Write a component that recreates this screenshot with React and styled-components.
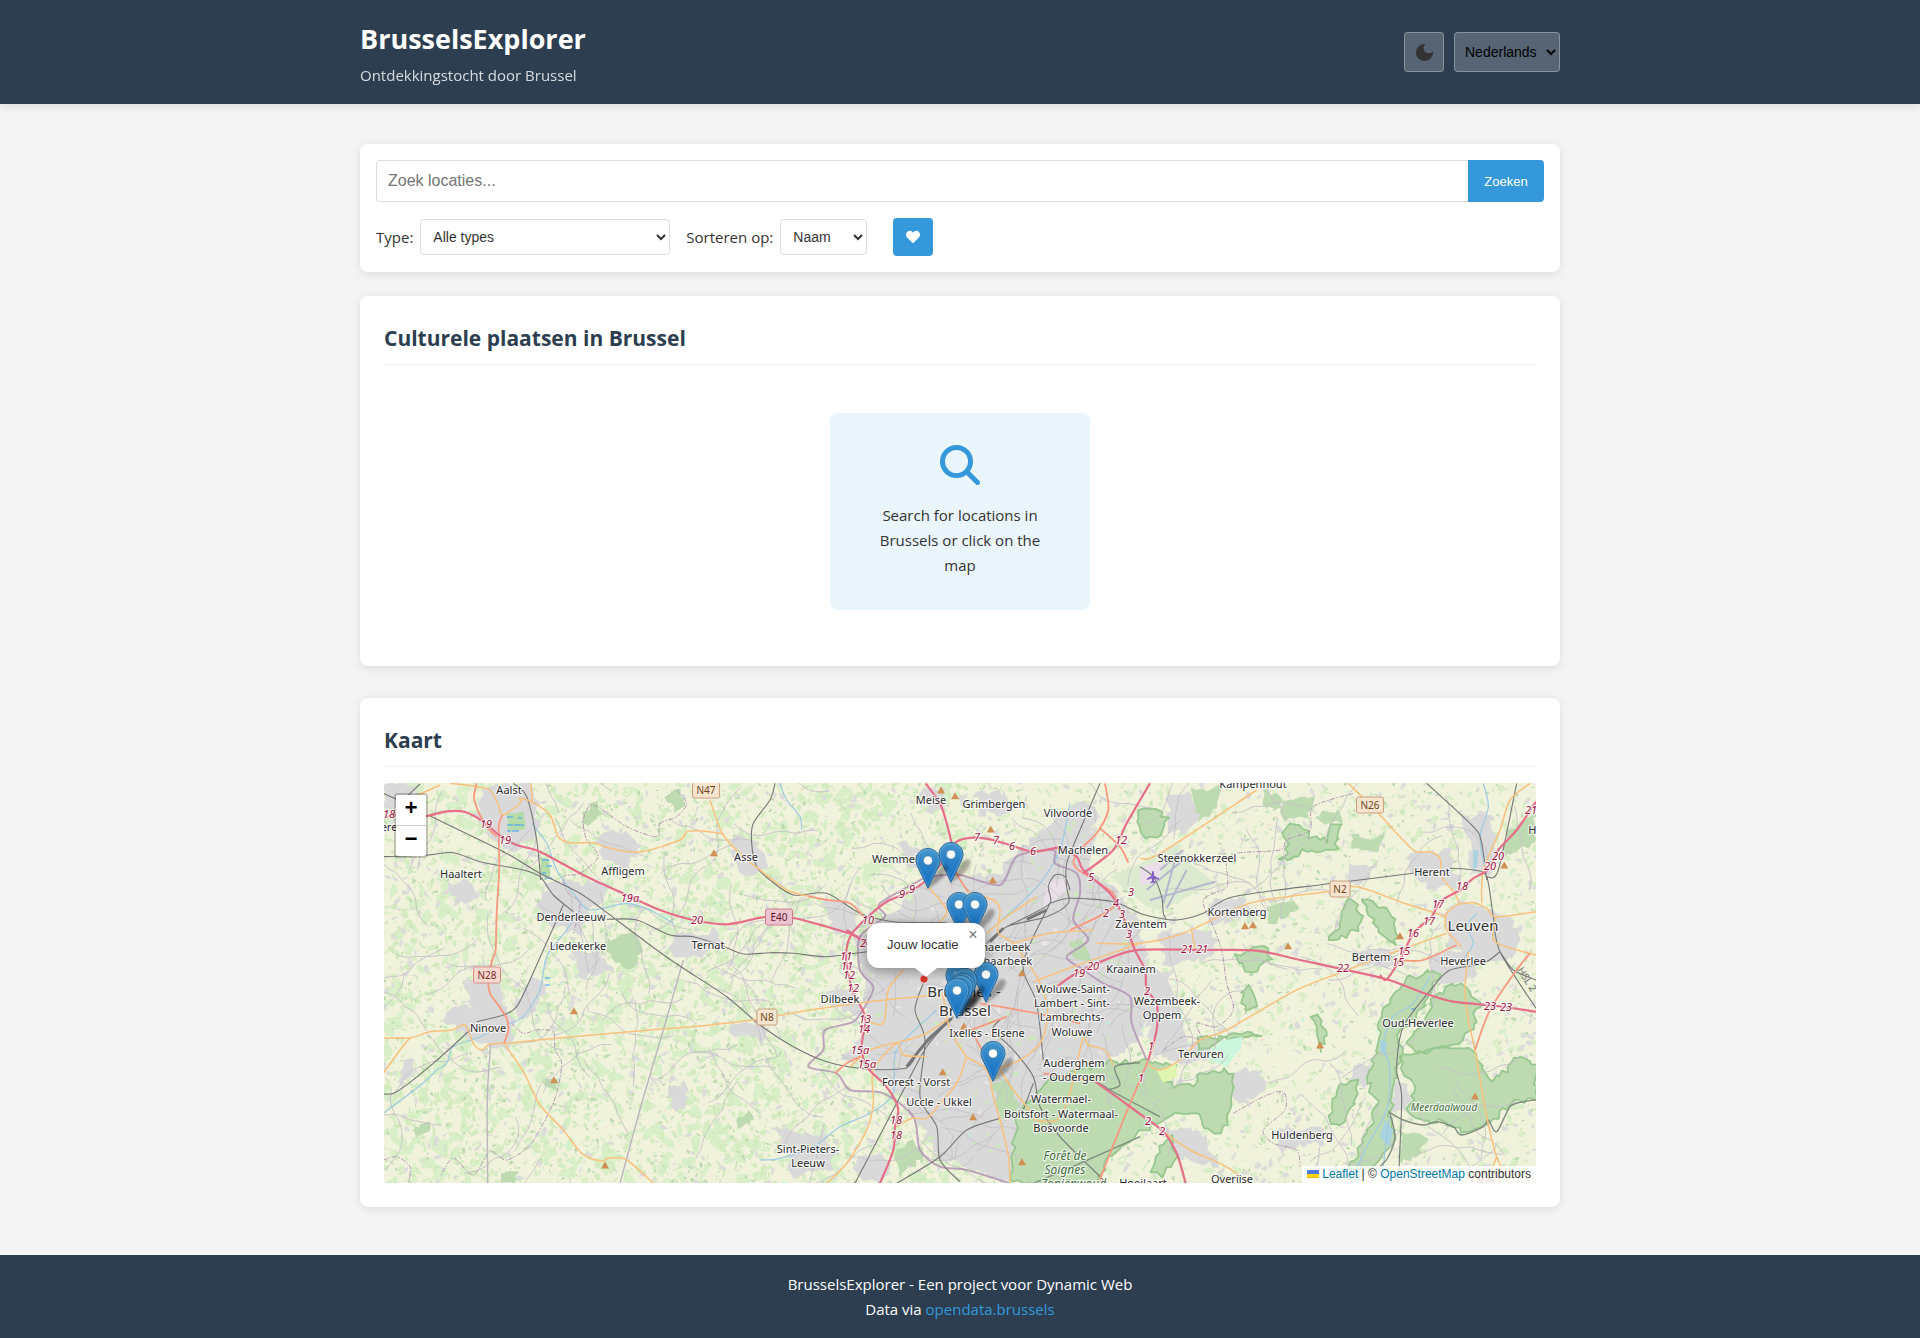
import React from 'react';
import styled, { createGlobalStyle, css } from 'styled-components';
import { FaHeart } from 'react-icons/fa';

const GlobalStyle = createGlobalStyle`
  * { box-sizing: border-box; margin: 0; padding: 0; }
  body {
    background: #f4f4f4;
    color: #333;
    font-family: 'Open Sans', 'Noto Sans', sans-serif;
    font-size: 15px;
    line-height: 26px;
  }
`;

const control = css`
  font-family: 'Liberation Sans', Arial, sans-serif;
  font-size: 14px;
  border-radius: 4px;
`;

const Page = styled.div`
  min-height: 100vh;
  display: flex;
  flex-direction: column;
`;

const Container = styled.div`
  width: 100%;
  max-width: 1200px;
  margin: 0 auto;
`;

const Header = styled.header`
  background: #2c3e50;
  color: #fff;
  padding: 16px 0;
  box-shadow: 0 2px 10px rgba(0, 0, 0, 0.1);
`;

const HeaderRow = styled(Container)`
  display: flex;
  justify-content: space-between;
  align-items: center;
`;

const Brand = styled.h1`
  font-size: 27px;
  line-height: 46px;
  font-weight: 700;
`;

const Tagline = styled.p`
  opacity: 0.8;
`;

const HeaderTools = styled.div`
  display: flex;
  gap: 10px;
`;

const ThemeButton = styled.button`
  ${control}
  width: 40px;
  height: 40px;
  display: grid;
  place-items: center;
  color: #333;
  background: rgba(255, 255, 255, 0.2);
  border: 1px solid rgba(255, 255, 255, 0.3);
`;

const LanguageSelect = styled.select`
  ${control}
  width: 106px;
  height: 40px;
  padding: 0 6px;
  color: #000;
  background: rgba(255, 255, 255, 0.2);
  border: 1px solid rgba(255, 255, 255, 0.3);
`;

const Main = styled.main`
  flex: 1;
  padding: 40px 0 48px;
`;

const Card = styled.section`
  background: #fff;
  border-radius: 8px;
  box-shadow: 0 2px 10px rgba(0, 0, 0, 0.1);
  padding: ${(p) => (p.$compact ? '16px' : '24px')};
  margin-top: ${(p) => p.$gap || 0}px;
`;

const SearchForm = styled.form`
  display: flex;
`;

const SearchInput = styled.input`
  ${control}
  flex: 1;
  min-width: 0;
  height: 42px;
  padding: 0 11px;
  font-size: 16px;
  color: #333;
  background: #fff;
  border: 1px solid #ddd;
  border-right: 0;
  border-radius: 4px 0 0 4px;
  &::placeholder { color: #757575; }
`;

const SearchButton = styled.button`
  ${control}
  width: 76px;
  font-size: 13px;
  font-weight: 500;
  color: #fff;
  background: #3498db;
  border: 0;
  border-radius: 0 4px 4px 0;
`;

const Filters = styled.div`
  display: flex;
  align-items: center;
  gap: 16px;
  margin-top: 16px;
`;

const FilterGroup = styled.div`
  display: flex;
  align-items: center;
  gap: 7px;
`;

const FilterSelect = styled.select`
  ${control}
  width: ${(p) => p.$width}px;
  height: 36px;
  padding: 0 8px;
  color: #333;
  background: #fff;
  border: 1px solid #ddd;
`;

const FavouriteButton = styled.button`
  ${control}
  width: 40px;
  height: 38px;
  margin-left: 10px;
  display: grid;
  place-items: center;
  color: #fff;
  background: #3498db;
  border: 0;
`;

const Title = styled.h2`
  font-size: 21px;
  line-height: 36px;
  color: #2c3e50;
  padding-bottom: 8px;
  margin-bottom: 16px;
  border-bottom: 1px solid #eee;
`;

const Results = styled.div`
  padding: 32px 0;
  display: flex;
  justify-content: center;
`;

const Placeholder = styled.div`
  width: 260px;
  padding: 32px 40px;
  border-radius: 8px;
  background: #ebf5fc;
  text-align: center;
  line-height: 25px;
  svg { display: block; margin: 0 auto 18px; }
`;

const MapFrame = styled.div`
  position: relative;
  height: 400px;
  border-radius: 4px;
  overflow: hidden;
  background: #ddd;
  font: 12px/18px 'Liberation Sans', Arial, sans-serif;
`;

const MapSvg = styled.svg`
  display: block;
  width: 100%;
  height: 100%;
  font-family: 'Noto Sans', sans-serif;
`;

const ZoomControls = styled.div`
  position: absolute;
  top: 10px;
  left: 10px;
  border: 2px solid rgba(0, 0, 0, 0.2);
  border-radius: 4px;
  background-clip: padding-box;
  display: flex;
  flex-direction: column;
`;

const ZoomButton = styled.button`
  width: 30px;
  height: 30px;
  background: #fff;
  border: 0;
  color: #000;
  font: bold 22px/30px 'Liberation Mono', monospace;
  &:first-child {
    height: 31px;
    border-bottom: 1px solid #ccc;
    border-radius: 2px 2px 0 0;
  }
  &:last-child { border-radius: 0 0 2px 2px; }
`;

const Popup = styled.div`
  position: absolute;
  left: calc(50% - 93px);
  top: 140px;
  width: 118px;
  height: 45px;
  padding: 13px 20px;
  border-radius: 12px;
  background: #fff;
  color: #333;
  font-size: 13px;
  white-space: nowrap;
  box-shadow: 0 3px 14px rgba(0, 0, 0, 0.4);
  &::after {
    content: '';
    position: absolute;
    left: 48px;
    top: 45px;
    border: 11px solid transparent;
    border-top: 9px solid #fff;
    border-bottom: 0;
  }
`;

const PopupClose = styled.button`
  position: absolute;
  top: 0;
  right: 0;
  width: 24px;
  height: 24px;
  border: 0;
  background: none;
  color: #757575;
  font: 16px/24px 'Liberation Sans', Arial, sans-serif;
`;

const Attribution = styled.div`
  position: absolute;
  right: 0;
  bottom: 0;
  height: 17px;
  padding: 0 5px;
  line-height: 17px;
  background: rgba(255, 255, 255, 0.8);
  a { color: #0078a8; text-decoration: none; }
`;

const Footer = styled.footer`
  background: #2c3e50;
  color: #fff;
  text-align: center;
  line-height: 25px;
  padding: 17px 0 16px;
  a { color: #3498db; text-decoration: none; }
`;

/* ---------- Map sheets: every sheet holds its own survey grid at 1:3 ---------- */

const SHEETS = {
  nw: [350, 680], sw: [350, 930], n: [760, 770],
  s: [760, 970], ne: [1140, 770], se: [1140, 970],
};

const place = (sheet, x, y) => [SHEETS[sheet][0] + x / 3, SHEETS[sheet][1] + y / 3];

const parse = (sheet, text) =>
  text.trim().split(/\s+/).map((pair) => {
    const [x, y] = pair.split(',').map(Number);
    return place(sheet, x, y);
  });

const f = (v) => v.toFixed(1);

const curve = (pts) => {
  let d = `M${f(pts[0][0])} ${f(pts[0][1])}`;
  for (let i = 0; i < pts.length - 1; i += 1) {
    const a = pts[i - 1] || pts[i];
    const b = pts[i];
    const c = pts[i + 1];
    const e = pts[i + 2] || c;
    d += `C${f(b[0] + (c[0] - a[0]) / 7)} ${f(b[1] + (c[1] - a[1]) / 7)} ${f(c[0] - (e[0] - b[0]) / 7)} ${f(c[1] - (e[1] - b[1]) / 7)} ${f(c[0])} ${f(c[1])}`;
  }
  return d;
};

const lines = (rows) => rows.map(([sheet, text]) => curve(parse(sheet, text))).join('');

const seeded = (seed) => {
  let s = seed;
  return () => {
    s = (s * 1664525 + 1013904223) % 4294967296;
    return s / 4294967296;
  };
};

const crumple = (pts, rnd, amount) => {
  const out = [];
  pts.forEach((a, i) => {
    const b = pts[(i + 1) % pts.length];
    const n = Math.max(1, Math.round(Math.hypot(b[0] - a[0], b[1] - a[1]) / 5));
    for (let k = 0; k < n; k += 1) {
      out.push([
        a[0] + ((b[0] - a[0]) * k) / n + (rnd() - 0.5) * amount,
        a[1] + ((b[1] - a[1]) * k) / n + (rnd() - 0.5) * amount,
      ]);
    }
  });
  return `M${out.map((p) => `${f(p[0])} ${f(p[1])}`).join('L')}Z`;
};

const areas = (rows, seed, amount) => {
  const rnd = seeded(seed);
  return rows.map(([sheet, text]) => crumple(parse(sheet, text), rnd, amount)).join('');
};

const patches = (seed, count, min, max, box = [384, 783, 1152, 400]) => {
  const rnd = seeded(seed);
  let d = '';
  for (let i = 0; i < count; i += 1) {
    const x = box[0] + rnd() * box[2];
    const y = box[1] + rnd() * box[3];
    const len = min + rnd() * (max - min);
    const wide = len * (0.25 + rnd() * 0.45);
    const turn = rnd() * Math.PI;
    const n = 6;
    const pts = [];
    for (let k = 0; k < n; k += 1) {
      const t = (k / n) * Math.PI * 2;
      const r = 0.55 + rnd() * 0.75;
      const px = Math.cos(t) * len * r * 0.5;
      const py = Math.sin(t) * wide * r * 0.5;
      pts.push(`${f(x + px * Math.cos(turn) - py * Math.sin(turn))} ${f(y + px * Math.sin(turn) + py * Math.cos(turn))}`);
    }
    d += `M${pts.join('L')}Z`;
  }
  return d;
};

const lanes = (seed, count, steps, box = [384, 783, 1152, 400]) => {
  const rnd = seeded(seed);
  let d = '';
  for (let i = 0; i < count; i += 1) {
    let x = box[0] + rnd() * box[2];
    let y = box[1] + rnd() * box[3];
    let a = rnd() * Math.PI * 2;
    const pts = [[x, y]];
    for (let k = 0; k < steps; k += 1) {
      a += (rnd() - 0.5) * 0.9;
      x += Math.cos(a) * 11;
      y += Math.sin(a) * 11;
      pts.push([x, y]);
    }
    d += curve(pts);
  }
  return d;
};

const CITY = [['n', '400,440 480,350 560,310 700,320 780,240 880,150 960,90 1010,120 990,300 1060,360 1130,430 1160,560 1170,680 1150,800 1040,880 1080,960 1030,1050 900,1070 790,1090 750,1240 640,1200 540,1160 470,1050 420,980 370,930 310,880 230,870 300,800 330,720 300,600 280,500']];

const TOWNS = [
  ['nw', '400,320 530,310 560,370 560,460 500,520 420,470 380,400'],
  ['nw', '590,610 680,600 720,680 700,760 600,740 560,680'],
  ['nw', '100,320 160,310 200,345 150,390 100,380'],
  ['nw', '740,470 820,450 880,500 830,560 760,540'],
  ['nw', '700,600 790,610 760,670 700,680'],
  ['nw', '300,610 350,590 380,650 320,680'],
  ['nw', '1150,470 1220,480 1250,570 1190,590 1150,550'],
  ['sw', '340,150 440,140 470,230 500,280 480,360 400,350 280,280 290,240 370,230'],
  ['sw', '540,150 590,140 560,230 500,270 490,240'],
  ['sw', '660,60 740,70 790,130 700,140'],
  ['sw', '970,20 1100,0 1110,60 1010,90 960,70'],
  ['sw', '1140,280 1250,270 1260,330 1150,320'],
  ['sw', '950,480 1010,460 1010,530 980,540'],
  ['sw', '160,390 200,400 190,450 150,450'],
  ['n', '420,220 500,230 500,300 440,300'],
  ['n', '480,60 560,60 550,120 500,130'],
  ['n', '640,60 740,70 760,130 660,130'],
  ['n', '180,380 270,400 290,480 220,500'],
  ['s', '190,60 300,60 300,130 220,120'],
  ['ne', '80,80 150,60 180,130 140,200 90,180'],
  ['ne', '200,400 310,370 340,420 220,470'],
  ['ne', '60,480 220,490 230,560 70,590'],
  ['ne', '620,290 700,290 690,340 620,340'],
  ['ne', '800,250 930,240 960,350 880,360 820,310'],
  ['ne', '920,420 980,390 1070,430 1140,470 1120,560 1000,570 920,520'],
  ['ne', '970,130 1060,150 1060,310 1000,300'],
  ['ne', '640,540 760,540 770,590 650,590'],
  ['ne', '860,560 990,540 1010,620 900,640'],
  ['se', '0,0 70,0 120,120 150,240 50,260 20,150'],
  ['se', '70,230 180,220 240,270 120,290'],
  ['se', '70,470 200,500 230,590 110,560'],
  ['se', '260,300 360,300 380,360 300,410'],
  ['se', '640,290 700,280 680,350 630,330'],
  ['se', '760,330 800,350 810,430 750,430'],
  ['se', '400,480 540,470 560,520 420,540'],
  ['s', '50,480 200,500 220,590 100,620'],
  ['s', '280,560 360,540 400,620 300,640'],
];

const FORESTS = [
  ['se', '-370,440 -280,330 -90,275 50,275 110,285 60,310 100,350 170,345 180,305 220,310 260,290 280,330 265,390 270,460 230,490 190,480 180,440 110,430 50,460 -20,500 -90,560 -130,640 -390,640'],
  ['se', '790,260 850,240 950,235 1000,245 1050,330 1100,300 1140,255 1188,290 1188,385 1110,400 1060,450 980,490 900,455 860,460 800,430 830,350 790,300'],
  ['se', '880,80 950,40 1020,95 990,190 920,230 840,250 800,220 860,160'],
  ['se', '720,130 800,30 870,0 900,10 850,110 780,190 780,260 750,420 760,520 700,590 640,640 620,620 680,500 710,400 680,320 710,240'],
  ['se', '600,350 650,335 660,370 600,470 565,455 580,400'],
  ['se', '515,135 545,145 560,190 540,240 525,190'],
  ['se', '300,60 330,50 350,110 315,120'],
  ['se', '170,210 300,195 370,190 240,210 180,250'],
  ['se', '60,530 90,500 110,560 70,620 40,610'],
  ['ne', '430,190 470,160 510,200 570,210 575,160 595,170 590,240 500,240 420,275 450,230'],
  ['ne', '600,420 640,385 665,440 650,480 600,510 565,510 600,460'],
  ['ne', '665,380 700,400 760,430 775,480 760,530 720,490 690,440'],
  ['ne', '0,120 50,110 80,150 50,200 0,200'],
  ['ne', '290,560 370,530 390,570 330,610'],
];

const WOODS = [
  ['nw', '700,390 735,370 760,400 720,430 695,425'],
  ['nw', '990,330 1010,380 970,400 950,350'],
  ['sw', '770,30 850,10 880,70 830,120 780,90'],
  ['sw', '190,590 230,580 240,610 200,630'],
  ['sw', '560,450 620,440 625,480 590,470'],
  ['sw', '1160,560 1200,540 1210,580 1170,590'],
  ['sw', '460,730 500,720 490,760 460,760'],
  ['ne', '160,60 250,50 230,120 180,150'],
  ['ne', '370,60 420,80 420,120 360,110'],
  ['ne', '420,90 520,80 500,150 430,150'],
  ['ne', '540,130 600,120 610,160 540,160'],
  ['ne', '640,200 730,200 720,250 640,240'],
  ['ne', '1100,190 1188,120 1188,220 1090,260'],
  ['ne', '380,410 460,390 480,420 390,460'],
  ['n', '930,510 960,500 990,580 940,570'],
  ['n', '600,500 650,540 620,570'],
  ['s', '690,340 740,320 780,420 770,450 720,440'],
  ['s', '400,540 460,510 500,560 420,620'],
  ['se', '780,480 860,500 830,560 780,580'],
];

const MOTORWAYS = lines([
  ['nw', '100,415 130,405 165,410 230,408 290,394 345,396 400,425 447,465 500,495 570,515 700,585 830,645 930,690 1030,720 1130,733 1245,711 1330,714 1430,740 1505,762'],
  ['n', '497,40 540,100 560,160 575,220'],
  ['n', '895,232 820,245 750,225 690,208 640,203 590,215 560,260 500,330 440,370 380,395 330,435 275,492 258,550 265,610 280,670 315,740 305,830 320,890 370,940 400,980 415,1020 405,1070 400,1140 360,1240'],
  ['n', '895,232 950,260 970,300 1050,370 1085,430 1110,500 1125,541 1155,600 1160,660 1190,700 1190,780 1165,870'],
  ['n', '970,310 1060,240 1100,160 1170,40'],
  ['n', '890,650 940,615 1000,585 1125,541 1340,540 1490,542 1620,570 1750,598 1880,628 2000,672 2080,695 2210,708 2328,725'],
  ['n', '275,492 320,520 260,480'],
  ['se', '-140,330 0,432 70,485 110,550 137,640'],
  ['ne', '1188,95 1130,180 1075,240 1050,295 1000,325 960,360 900,395 875,440 820,490 785,560 740,628 720,615'],
]);

const TRUNKS = lines([
  ['nw', '380,310 372,350 385,395 410,440 440,470'],
  ['nw', '458,405 446,440 448,560 440,700 437,810 430,830 415,890 420,940 445,975 470,1015 475,1050 462,1090'],
  ['n', '1035,40 1045,120 1010,190 960,240 945,290 1060,370 1050,420 930,480'],
  ['n', '1020,175 1080,230 1105,278'],
  ['n', '145,378 200,390 270,400 320,450'],
  ['n', '575,220 590,310 625,365'],
  ['ne', '780,570 850,570 950,525'],
  ['ne', '1170,550 1130,600 1050,720 1005,840'],
  ['s', '1165,270 1090,450 1015,640'],
  ['s', '225,310 260,280 300,260'],
  ['s', '640,190 700,310'],
  ['s', '660,100 830,130 960,160'],
  ['s', '850,310 980,330'],
  ['s', '740,140 620,185'],
]);

const SECONDARY = lines([
  ['nw', '205,345 270,315'],
  ['nw', '300,310 370,318 420,330 445,375 458,405 510,370 510,355 550,368 600,405 625,470 660,488 730,488 780,505 870,516 990,480 1010,455 1060,453 1118,462'],
  ['nw', '1080,360 1118,462 1180,530 1230,570 1310,630 1375,648'],
  ['nw', '542,310 547,365'],
  ['sw', '100,324 180,324 240,305 305,300 345,285 370,340 395,360 420,343 490,338 620,325 900,300 1060,287 1220,268 1380,240 1560,215 1730,198 1800,195'],
  ['sw', '180,324 150,360 100,430'],
  ['sw', '462,340 520,425 570,525 640,600 695,670 755,693 775,685 830,690 910,760'],
  ['n', '505,350 560,420 540,455'],
  ['n', '625,365 700,390 720,420 715,490 760,520 830,620 860,700 860,760 840,820 780,870 700,900'],
  ['s', '620,262 680,300 700,380 720,450 745,555 750,640'],
  ['s', '720,300 760,360 800,410 830,450 890,450 920,400 940,330 970,200 985,225 1035,240 1060,285'],
  ['s', '620,262 590,340 540,400 500,445 455,445 410,470'],
  ['s', '560,150 490,195 400,220 330,240 270,290'],
  ['s', '200,640 260,580 320,480 340,400 340,300 410,220 430,255 500,260'],
  ['s', '430,0 385,60 370,160 310,150'],
  ['s', '550,80 570,180 620,262'],
  ['n', '760,520 870,490 1000,480'],
  ['n', '820,635 940,590 1140,520'],
  ['n', '680,490 740,440 830,380'],
  ['ne', '0,265 60,250 350,60'],
  ['ne', '-130,520 0,520 130,490 330,400 560,365 650,350 780,395 920,440'],
  ['ne', '625,40 720,135 820,240 870,245 900,265 905,320 945,370 960,400 1000,398 1040,415 1068,440 1188,425'],
  ['ne', '960,400 920,430 920,480 965,530'],
  ['ne', '1068,440 1065,515 1188,555'],
  ['ne', '920,490 780,540 600,608 460,665 260,780 180,810 120,870 60,900 25,885'],
  ['ne', '155,480 165,540'],
  ['ne', '1170,40 1110,90 1080,180 1030,300 1025,400'],
  ['ne', '985,545 975,660 985,750 1005,840 1040,1040 1070,1160 1110,1240'],
  ['se', '1070,560 1055,600'],
  ['se', '70,485 150,540 240,580 290,610 320,640'],
]);

const RAILWAYS = lines([
  ['nw', '100,340 140,358'],
  ['nw', '170,350 210,312'],
  ['nw', '240,408 460,515 570,580 690,640 800,720 920,810 1000,865 1130,950 1230,1035 1330,1100 1430,1145 1550,1167 1650,1167 1680,1155 1730,1080 1810,1010'],
  ['nw', '100,530 230,525 310,518 390,545 520,570 570,590 610,645 670,695'],
  ['nw', '490,310 530,350 560,480 572,600'],
  ['nw', '640,675 580,810 540,900 500,980 460,1005 380,1025'],
  ['nw', '770,718 860,720 960,765 1030,770 1110,795 1180,822 1260,818 1330,820 1430,830 1550,815'],
  ['nw', '1275,310 1260,360 1210,430 1205,490 1220,560 1260,600 1330,645 1430,640 1530,700 1630,725 1790,728'],
  ['sw', '100,492 140,485 250,400 360,300'],
  ['n', '1020,40 960,180 920,280 920,350 925,400 860,440 740,470 680,520'],
  ['n', '740,470 800,440 870,400 865,350 885,315 915,320 930,360'],
  ['n', '870,400 930,385 1060,395 1140,430 1200,445 1250,450 1330,430 1420,380 1700,342 1960,310'],
  ['s', '285,640 420,380 500,230 580,140'],
  ['s', '490,40 465,120 495,210 480,380 530,470 540,570 600,635'],
  ['s', '410,640 540,560 620,480 720,445'],
  ['s', '720,150 700,180 760,240 820,320 840,410 900,500 1000,600 1040,640'],
  ['s', '850,270 830,100 790,-20 870,-200'],
  ['s', '820,340 790,420'],
  ['ne', '930,295 1000,300 1040,320 1060,440 1080,545 1188,715'],
  ['ne', '860,40 1000,170 1025,220 1040,330'],
  ['ne', '1130,40 1075,300 1040,320'],
  ['ne', '1080,545 1030,580 930,600 880,650 790,770 770,900 785,980 775,1240'],
  ['ne', '0,290 40,320 65,380 70,430 80,450'],
  ['ne', '1080,545 1120,600 1188,630'],
]);

const YARDS = lines([
  ['s', '440,290 500,215 575,145'],
  ['n', '730,475 690,515'],
  ['n', '860,420 800,448'],
]);

const RIVERS = lines([
  ['nw', '545,430 590,490 620,570 670,640 720,690 830,670 900,690 970,730'],
  ['nw', '690,690 650,750 590,830 570,930 520,1010 480,1030'],
  ['sw', '100,550 180,490 230,450 260,420 290,400 310,350 380,325 430,300'],
  ['n', '930,100 900,240 840,340 770,410 690,480'],
  ['n', '60,40 80,90 120,140 125,180'],
  ['s', '0,570 60,565 160,530 240,470 330,430 400,370 410,240 530,120'],
  ['ne', '1030,40 1045,110 1020,200 1035,300'],
  ['ne', '1010,430 980,470 1000,520 960,580'],
  ['se', '870,20 820,100 760,140 730,220 750,300 740,420 680,530 640,620'],
  ['se', '750,440 740,500 730,590'],
]);

const BORDERS = lines([
  ['nw', '980,330 1010,370 980,410 930,430 920,470 830,440 730,375 700,420 710,480 745,530 690,580 640,590 655,640 690,670 670,760'],
  ['sw', '485,280 520,310 560,300 610,305 615,360 635,400 620,490 590,560 540,645 470,690 420,665 370,735 310,685 270,740'],
  ['sw', '100,690 140,680 180,710 175,760'],
  ['ne', '640,70 520,110 510,180 440,210 420,240 290,250 260,280 260,350 190,390 220,470 245,540 260,640 280,720 230,770 170,760 190,810'],
  ['se', '70,240 130,200 180,210'],
  ['se', '280,430 370,380 430,365 435,420 370,480 400,520 470,540 480,590'],
]);

const REGION = lines([
  ['n', '500,320 600,315 720,345 770,260 880,240 885,280 950,310 960,370 940,450 985,510 920,560 970,600 1030,640 1110,680 1115,760 1160,870'],
  ['n', '500,320 360,400 375,440 300,500 300,600 340,650 320,700 280,755 195,780 190,840 145,890 230,910 270,960 370,970 460,1040 480,1140 540,1190 620,1200 750,1240'],
]);

const GREY_BORDER = lines([
  ['se', '745,425 790,450 850,465 890,455 940,470 965,495 1030,470 1045,450 1070,485 1110,410 1150,395 1188,390'],
  ['se', '750,430 765,500 745,560 720,590'],
  ['s', '990,320 1050,360 1200,440'],
  ['s', '820,640 960,580 1140,500'],
  ['s', '1040,360 1080,345 1065,290 1140,278'],
]);

const RUNWAYS = lines([
  ['ne', '20,360 130,270'], ['ne', '30,390 225,335'], ['ne', '110,250 70,400'],
  ['ne', '60,300 130,240'], ['ne', '140,300 80,415'],
]);

const LABELS = [
  ['nw', 478, 343, 'Aalst'], ['nw', 333, 593, 'Haaltert'], ['nw', 820, 585, 'Affligem'],
  ['nw', 1187, 543, 'Asse'], ['nw', 664, 724, 'Denderleeuw'], ['nw', 118, 452, 'ere'],
  ['sw', 683, 59, 'Liedekerke'], ['sw', 1075, 56, 'Ternat'], ['sw', 413, 305, 'Ninove'],
  ['n', 514, 102, 'Meise'], ['n', 701, 114, 'Grimbergen'], ['n', 925, 140, 'Vilvoorde'],
  ['n', 968, 251, 'Machelen'], ['n', 404, 278, 'Wemmel'], ['n', 1144, 473, 'Zaventem'],
  ['n', 1114, 608, 'Kraainem'], ['n', 720, 542, 'Schaerbeek'], ['n', 716, 584, '- Schaarbeek'],
  ['s', 241, 98, 'Dilbeek'], ['s', 680, 201, 'Ixelles - Elsene'],
  ['s', 938, 70, 'Woluwe-Saint-'], ['s', 937, 112, 'Lambert - Sint-'],
  ['s', 937, 154, 'Lambrechts-'], ['s', 937, 197, 'Woluwe'],
  ['s', 943, 291, 'Auderghem'], ['s', 943, 334, '- Oudergem'],
  ['s', 467, 349, 'Forest - Vorst'], ['s', 536, 407, 'Uccle - Ukkel'],
  ['s', 902, 400, 'Watermael-'], ['s', 902, 443, 'Boitsfort - Watermaal-'],
  ['s', 902, 486, 'Bosvoorde'], ['s', 145, 548, 'Sint-Pieters-'], ['s', 145, 590, 'Leeuw'],
  ['s', 1148, 650, 'Hoeilaart'],
  ['se', 80, 105, 'Wezembeek-'], ['se', 65, 147, 'Oppem'],
  ['ne', 338, 53, 'Kampenhout'], ['ne', 170, 275, 'Steenokkerzeel'],
  ['ne', 292, 438, 'Kortenberg'], ['ne', 877, 318, 'Herent'], ['ne', 692, 574, 'Bertem'],
  ['ne', 968, 584, 'Heverlee'], ['ne', 1210, 192, 'Holsb'],
  ['se', 182, 263, 'Tervuren'], ['se', 486, 506, 'Huldenberg'],
  ['se', 833, 171, 'Oud-Heverlee'], ['se', 275, 640, 'Overijse'],
  ['s', 613, 80, 'Bruxelles -', 'city'], ['s', 614, 137, 'Brussel', 'city'],
  ['ne', 1000, 483, 'Leuven', 'city'],
  ['s', 915, 570, 'Forêt de', 'wood'], ['s', 915, 612, 'Soignes', 'wood'],
  ['s', 930, 654, '- Zoniënwoud', 'wood'], ['se', 913, 422, 'Meerdaalwoud', 'grove'],
];

const LABEL_STYLES = {
  town: { size: 11, fill: '#2b2b2b' },
  city: { size: 15, fill: '#333' },
  wood: { size: 12, fill: '#46703f', italic: true },
  grove: { size: 10, fill: '#46703f', italic: true },
  exit: { size: 11, fill: '#a5123c', italic: true },
};

const EXITS = {
  nw: '18@118,415 19@407,443 19@466,492 19a@840,665 20@1042,731',
  n: '7@651,214 7@708,222 6@756,241 6@820,256 12@1083,222 9@427,383 9@457,370 10@324,461 2@310,532 11@257,570 11@262,600 12@266,628 5@993,333 3@1113,378 4@1069,412 2@1039,440 3@1085,444 3@1106,505 20@1000,601 19@957,622',
  s: '12@280,66 13@316,160 14@311,190 15a@300,252 15a@320,294 18@409,461 18@409,508 2@1162,74 1@1173,240 1@1144,335 2@1165,466',
  ne: '21@140,549 21@187,549 22@610,607 21@1173,132 20@1073,270 20@1050,299 18@967,361 17@893,413 17@868,464 16@820,502 15@793,556 15@775,587',
  se: '23@1049,120 23@1097,122 2@25,466 2@65,496',
};

const SHIELDS = [
  ['nw', 1068, 331, 'N47', 'road'], ['sw', 411, 135, 'N28', 'trunk'],
  ['n', 57, 440, 'E40', 'motorway'], ['s', 22, 141, 'N8', 'road'],
  ['ne', 690, 105, 'N26', 'road'], ['ne', 600, 357, 'N2', 'road'],
  ['se', 1038, 632, 'N25', 'road'],
];

const SHIELD_COLOURS = {
  road: ['#f7e4cf', '#c9a27c', '#6b4520'],
  trunk: ['#f7d9d1', '#d68f83', '#7c2c22'],
  motorway: ['#ecc4cf', '#cf7c93', '#6d1030'],
};

const PEAKS = {
  nw: '1092,518', sw: '672,242 612,449 765,705',
  n: '543,60 585,77 692,177 698,330 786,608',
  s: '612,168 548,305 639,440 786,575',
  ne: '315,467 339,464 444,527 780,497 1093,285', se: '540,225 1005,378',
};

const MARKERS = [
  [951, 883], [928, 889], [959, 933], [975, 933], [986, 1003], [958, 1004],
  [965, 1009], [963, 1014], [961, 1016], [957, 1019], [993, 1082],
];

function MapLabel({ x, y, kind = 'town', children }) {
  const s = LABEL_STYLES[kind];
  return (
    <text
      x={Math.round(x)} y={Math.round(y)} fontSize={s.size} fill={s.fill}
      fontStyle={s.italic ? 'italic' : 'normal'} textAnchor="middle"
      stroke="#fff" strokeOpacity="0.75" strokeWidth="2.4" strokeLinejoin="round" paintOrder="stroke"
    >
      {children}
    </text>
  );
}

function Shield({ x, y, kind, children }) {
  const [fill, edge, ink] = SHIELD_COLOURS[kind];
  const w = children.length * 7 + 6;
  return (
    <g>
      <rect x={x - w / 2} y={y - 8} width={w} height="16" rx="2" fill={fill} stroke={edge} />
      <text x={x} y={y + 4} fontSize="10" fill={ink} textAnchor="middle">{children}</text>
    </g>
  );
}

function Marker({ x, y }) {
  return (
    <g transform={`translate(${x - 12.5} ${y - 41})`}>
      <path d="M12 41 L16 30 L26 18 Q33 15 32 22 Q29 31 12 41Z" fill="#000" opacity="0.3" filter="url(#soft)" />
      <path
        d="M12.5 .5C5.9.5.5 5.9.5 12.4c0 2.6 1 5.2 2.3 7.6L12.5 40.3 22.2 20c1.3-2.4 2.3-5 2.3-7.6C24.5 5.9 19.1.5 12.5.5z"
        fill="url(#pin)" stroke="#2e6c97" strokeWidth="1"
      />
      <path
        d="M12.5 1.6C6.5 1.6 1.6 6.5 1.6 12.4c0 2.4.9 4.8 2.2 7.1L12.5 37.7l8.7-18.2c1.3-2.3 2.2-4.7 2.2-7.1 0-5.9-4.9-10.8-10.9-10.8z"
        fill="none" stroke="#fff" strokeOpacity="0.15" strokeWidth="1.1"
      />
      <circle cx="12.5" cy="12.5" r="4.5" fill="#fff" stroke="#2e6c97" strokeOpacity="0.5" />
    </g>
  );
}

function MapDrawing() {
  return (
    <MapSvg viewBox="384 783 1152 400" preserveAspectRatio="xMidYMid slice" role="img" aria-label="Kaart van Brussel">
      <defs>
        <linearGradient id="pin" x1="0" y1="0" x2="0" y2="1">
          <stop offset="0" stopColor="#4498cf" />
          <stop offset="0.4" stopColor="#2e83c6" />
          <stop offset="1" stopColor="#126fc6" />
        </linearGradient>
        <filter id="soft" x="-30%" y="-30%" width="160%" height="160%">
          <feGaussianBlur stdDeviation="1.5" />
        </filter>
        <clipPath id="city"><path d={areas(CITY, 9, 8)} /></clipPath>
      </defs>
      <rect x="384" y="783" width="1152" height="400" fill="#f1f2dc" />
      <path d={patches(11, 900, 8, 22, [384, 783, 590, 400])} fill="#d9efc7" />
      <path d={patches(17, 4200, 2, 9, [384, 783, 590, 400])} fill="#d3ebbf" />
      <path d={patches(12, 1900, 2, 11, [974, 783, 562, 400])} fill="#d9edc6" />
      <path d={patches(13, 1900, 2, 6)} fill="#bddab1" />
      <path d={patches(14, 1700, 2, 10)} fill="#dcdcda" />
      <path d={patches(15, 160, 2, 5)} fill="#c9f5e0" />
      <path d={patches(16, 260, 1, 4)} fill="#f5dcce" />
      <path d={areas(TOWNS, 5, 8)} fill="#d9d9d9" />
      <path d={areas(CITY, 9, 8)} fill="#d9d9d9" />
      <g clipPath="url(#city)">
        <path d={patches(21, 520, 2, 8, [810, 790, 350, 400])} fill="#cde8bb" />
        <path d={patches(22, 110, 3, 9, [810, 790, 350, 400])} fill="#eae4e2" />
        <path d={patches(23, 60, 2, 6, [810, 790, 350, 400])} fill="#bfeedb" />
        <path d={lanes(24, 170, 4, [810, 790, 350, 400])} fill="none" stroke="#c2c0c4" strokeWidth="0.8" />
      </g>
      <path d={areas(WOODS, 6, 6)} fill="#bddab1" />
      <path d={areas(FORESTS, 7, 6)} fill="#bddab1" stroke="#98c88f" strokeWidth="1.8" strokeLinejoin="round" />
      <path d={areas([['ne', '-90,320 0,280 110,220 150,280 230,340 60,420 20,410']], 3, 1)} fill="#dcebcf" />
      <path d={areas([['ne', '0,290 70,270 60,330 0,350'], ['n', '860,340 920,320 930,350 850,420']], 3, 1)} fill="#eadfe8" />
      <path d={areas([['se', '250,210 310,200 300,240 260,290 190,260']], 3, 1)} fill="#ccf7de" />
      <path d={areas([['se', '50,300 110,280 110,320 70,340']], 3, 1)} fill="#dff5b0" />
      <path d={areas([['se', '735,450 760,480 750,530 720,500'], ['se', '720,210 740,215 735,260 720,240'], ['ne', '1000,240 1015,240 1012,290 1000,300']], 3, 1)} fill="#a9d3de" />
      <path d={areas([['nw', '470,400 525,395 525,450 475,455'], ['nw', '570,530 600,540 600,590 575,590']], 3, 2)} fill="#b5dba8" />
      <path
        d="M507 817h6M518 818h4M507 825h6M514 825h10M507 831h4M512 831h7M542 860h7M546 866h6M542 873h4M545 878h7M545 978h5M545 985h5M1411 1009h4"
        stroke="#3fa0ff" strokeWidth="1"
      />
      <path d={lanes(31, 170, 8)} fill="none" stroke="#c6c2c8" strokeWidth="0.9" />
      <path d={RIVERS} fill="none" stroke="#9dcbe3" strokeWidth="1.2" />
      <path d={BORDERS} fill="none" stroke="#b49ab2" strokeWidth="1" strokeDasharray="5 1.5 1.5 1.5" />
      <path d={REGION} fill="none" stroke="#ac8bb0" strokeOpacity="0.75" strokeWidth="2" />
      <path d={RUNWAYS} fill="none" stroke="#b7b6ce" strokeWidth="2" />
      <path d={lines([['sw', '1000,90 940,300 875,520 810,760'], ['sw', '422,345 412,500 413,760']])} fill="none" stroke="#bbb6be" strokeWidth="1.4" />
      <path d={RAILWAYS} fill="none" stroke="#777" strokeWidth="1.1" />
      <path d={YARDS} fill="none" stroke="#777" strokeWidth="3" />
      <path d={GREY_BORDER} fill="none" stroke="#7f8d7c" strokeWidth="1.4" />
      <path d={SECONDARY} fill="none" stroke="#f8c27e" strokeWidth="1.5" />
      <path d={TRUNKS} fill="none" stroke="#f9987f" strokeWidth="1.8" />
      <path d={MOTORWAYS} fill="none" stroke="#e66e89" strokeWidth="2.2" />
      {Object.entries(PEAKS).flatMap(([sheet, text]) =>
        parse(sheet, text).map(([x, y]) => (
          <path key={`${x}-${y}`} d={`M${f(x)} ${f(y - 3.5)}l4 7h-8z`} fill="#d08f55" />
        )))}
      <path
        transform="translate(1153 877)"
        d="M0-6c.8 0 1 .8 1 2v2.5l5 3v1.5l-5-1.5v2.5l1.6 1.3v1L0 5.7l-2.6.6v-1L-1 4V1.5L-6 3V1.500l5-3V-4c0-1.2.2-2 1-2z"
        fill="#8461c4"
      />
      {SHIELDS.map(([sheet, x, y, name, kind]) => {
        const [px, py] = place(sheet, x, y);
        return <Shield key={name} x={Math.round(px)} y={Math.round(py)} kind={kind}>{name}</Shield>;
      })}
      {Object.entries(EXITS).flatMap(([sheet, text]) =>
        text.split(' ').map((entry) => {
          const [name, at] = entry.split('@');
          const [[x, y]] = parse(sheet, at);
          return <MapLabel key={`${sheet}${entry}`} x={x} y={y} kind="exit">{name}</MapLabel>;
        }))}
      {LABELS.map(([sheet, x, y, name, kind]) => {
        const [px, py] = place(sheet, x, y);
        return <MapLabel key={name} x={px} y={py} kind={kind}>{name}</MapLabel>;
      })}
      <text transform="translate(1517 970) rotate(58)" fontSize="10" fill="#777">HSL 2</text>
      <circle cx="924" cy="979" r="4" fill="#d8392b" stroke="#fff" strokeOpacity="0.5" />
      {MARKERS.map(([x, y]) => <Marker key={`${x}-${y}`} x={x} y={y} />)}
    </MapSvg>
  );
}

function MoonIcon() {
  return (
    <svg width="17" height="17" viewBox="3 3 18 18" fill="currentColor" aria-hidden="true">
      <path d="M12 3a9 9 0 1 0 9 9c0-.46-.04-.92-.1-1.36a5.389 5.389 0 0 1-4.4 2.26 5.403 5.403 0 0 1-3.14-9.8c-.44-.06-.9-.1-1.36-.1z" />
    </svg>
  );
}

function SearchIcon() {
  return (
    <svg width="40" height="40" viewBox="0 0 40 40" fill="none" stroke="#3498db" strokeWidth="5" strokeLinecap="round" aria-hidden="true">
      <circle cx="16.5" cy="16.5" r="14" />
      <path d="M27 27 37.5 37.5" />
    </svg>
  );
}

function FlagIcon() {
  return (
    <svg width="12" height="8" viewBox="0 0 12 8" aria-hidden="true">
      <path fill="#4c7be1" d="M0 0h12v4H0z" />
      <path fill="#ffd500" d="M0 4h12v3H0z" />
      <path fill="#e0bc00" d="M0 7h12v1H0z" />
    </svg>
  );
}

export default function App() {
  return (
    <Page>
      <GlobalStyle />
      <Header>
        <HeaderRow>
          <div>
            <Brand>BrusselsExplorer</Brand>
            <Tagline>Ontdekkingstocht door Brussel</Tagline>
          </div>
          <HeaderTools>
            <ThemeButton type="button" aria-label="Donker thema"><MoonIcon /></ThemeButton>
            <LanguageSelect aria-label="Taal" defaultValue="nl">
              <option value="nl">Nederlands</option>
            </LanguageSelect>
          </HeaderTools>
        </HeaderRow>
      </Header>

      <Main>
        <Container>
          <Card $compact>
            <SearchForm onSubmit={(e) => e.preventDefault()}>
              <SearchInput type="text" placeholder="Zoek locaties..." aria-label="Zoek locaties" />
              <SearchButton type="submit">Zoeken</SearchButton>
            </SearchForm>
            <Filters>
              <FilterGroup>
                <label htmlFor="type">Type:</label>
                <FilterSelect id="type" $width={250}><option>Alle types</option></FilterSelect>
              </FilterGroup>
              <FilterGroup>
                <label htmlFor="sort">Sorteren op:</label>
                <FilterSelect id="sort" $width={87}><option>Naam</option></FilterSelect>
              </FilterGroup>
              <FavouriteButton type="button" aria-label="Favorieten"><FaHeart size={14} /></FavouriteButton>
            </Filters>
          </Card>

          <Card $gap={24}>
            <Title>Culturele plaatsen in Brussel</Title>
            <Results>
              <Placeholder>
                <SearchIcon />
                <p>Search for locations in Brussels or click on the map</p>
              </Placeholder>
            </Results>
          </Card>

          <Card $gap={32}>
            <Title>Kaart</Title>
            <MapFrame>
              <MapDrawing />
              <ZoomControls>
                <ZoomButton type="button" aria-label="Inzoomen">+</ZoomButton>
                <ZoomButton type="button" aria-label="Uitzoomen">−</ZoomButton>
              </ZoomControls>
              <Popup>
                Jouw locatie
                <PopupClose type="button" aria-label="Sluiten">×</PopupClose>
              </Popup>
              <Attribution>
                <FlagIcon /> <a href="#leaflet">Leaflet</a> | © <a href="#osm">OpenStreetMap</a> contributors
              </Attribution>
            </MapFrame>
          </Card>
        </Container>
      </Main>

      <Footer>
        <p>BrusselsExplorer - Een project voor Dynamic Web</p>
        <p>Data via <a href="#opendata">opendata.brussels</a></p>
      </Footer>
    </Page>
  );
}
